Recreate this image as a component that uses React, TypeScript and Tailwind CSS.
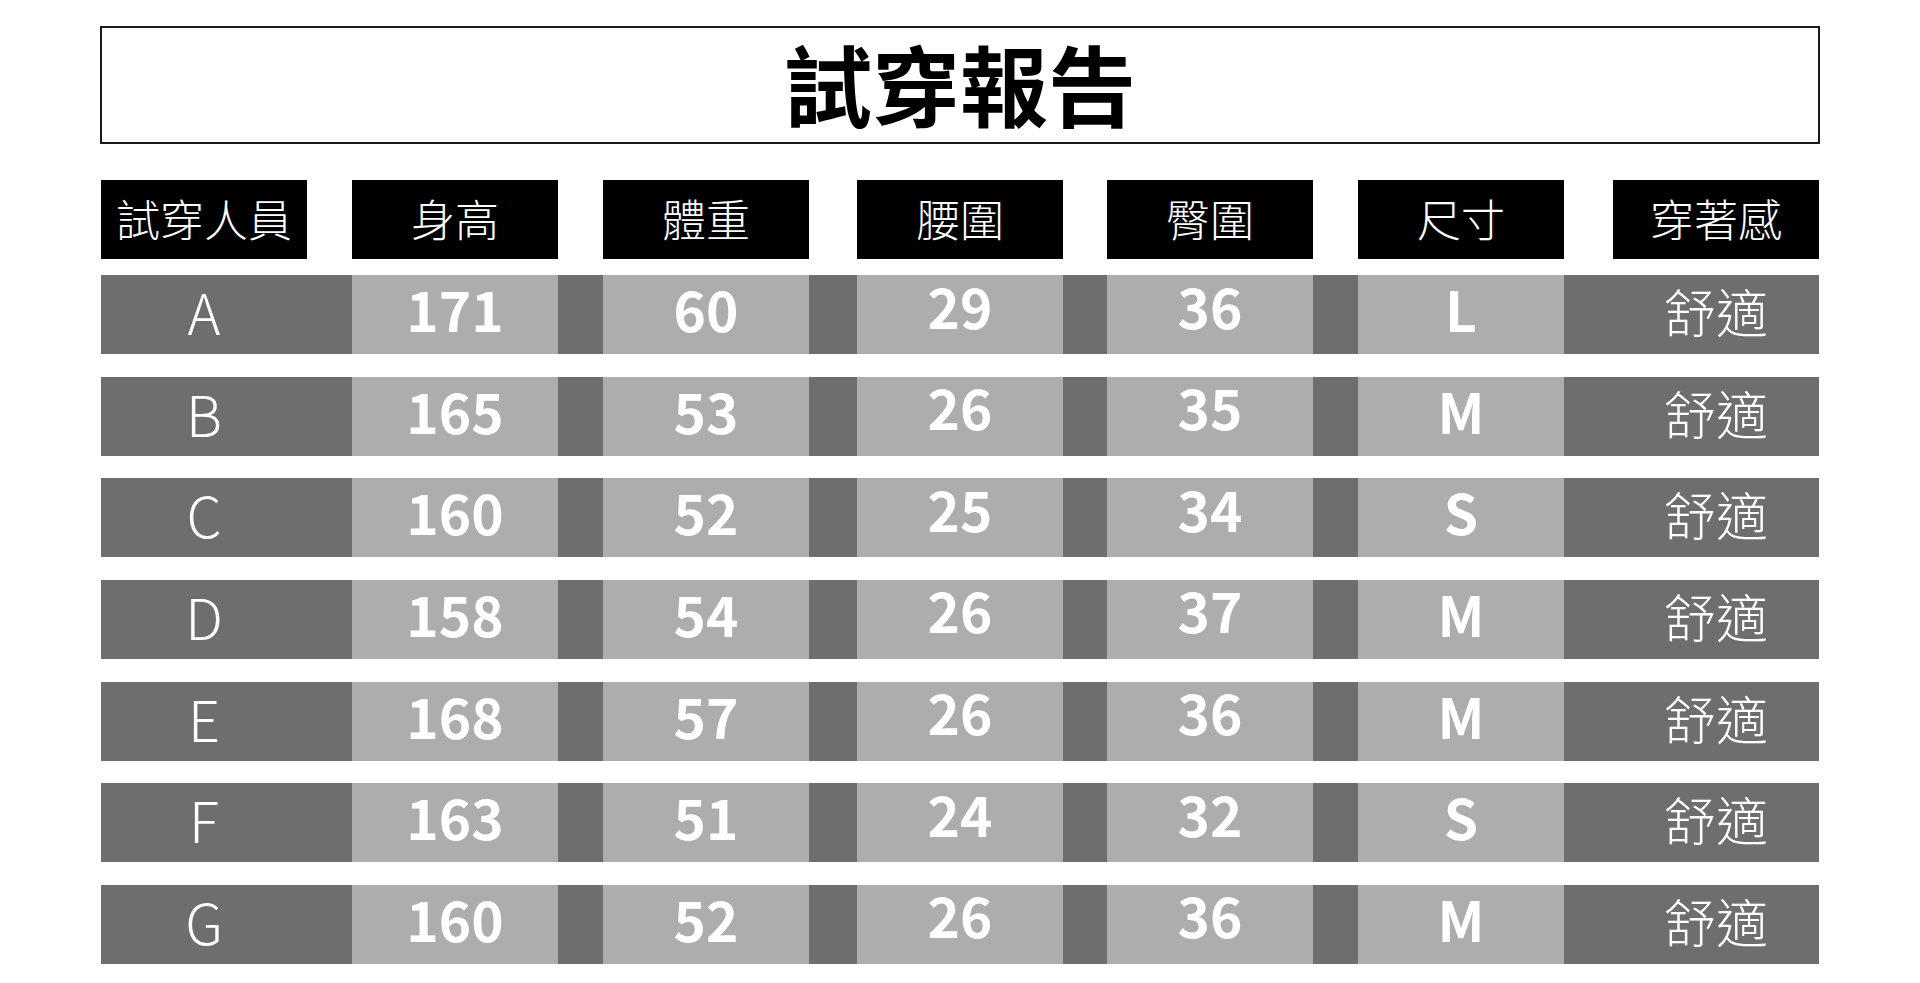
import React from "react";

const headers = ["試穿人員", "身高", "體重", "腰圍", "臀圍", "尺寸", "穿著感"];
const rows: string[][] = [
  ["A", "171", "60", "29", "36", "L", "舒適"],
  ["B", "165", "53", "26", "35", "M", "舒適"],
  ["C", "160", "52", "25", "34", "S", "舒適"],
  ["D", "158", "54", "26", "37", "M", "舒適"],
  ["E", "168", "57", "26", "36", "M", "舒適"],
  ["F", "163", "51", "24", "32", "S", "舒適"],
  ["G", "160", "52", "26", "36", "M", "舒適"],
];

const gaps = ["", "ml-[45px]", "ml-[45px]", "ml-[48px]", "ml-[44px]", "ml-[45px]", "ml-[49px]"];

const font = { fontFamily: '"Noto Sans CJK TC", "Noto Sans", sans-serif' };

export default function App() {
  return (
    <div className="w-[1920px] h-[983px] bg-white overflow-hidden" style={font}>
      <div className="ml-[100px] w-[1720px] pt-[26px] flex flex-col">
        <div className="h-[118px] border-2 border-[#1a1a1a] flex items-center justify-center pb-[6px]">
          <span className="text-[88px] font-bold leading-none text-black">試穿報告</span>
        </div>
        <div className="mt-[36px] flex px-px">
          {headers.map((h, i) => (
            <div key={h} className={"w-[206px] h-[79px] bg-black flex items-center justify-center pb-[4px] " + gaps[i]}>
              <span className="text-[44px] font-light leading-none text-white">{h}</span>
            </div>
          ))}
        </div>
        <div className="mt-[16px] flex flex-col gap-[22.67px] px-px">
          {rows.map((r) => (
            <div key={r[0]} className="h-[79px] bg-[#6f6e6f] flex">
              {r.map((c, i) => {
                const light = i >= 1 && i <= 5;
                const up = i === 3 || i === 4;
                let pad = "pb-[7px] ";
                if (light) pad = up ? "pb-[19px] " : "pb-[12px] ";
                return (
                  <div
                    key={i}
                    className={
                      "w-[206px] h-full flex items-center justify-center text-white leading-none " +
                      (light ? "bg-[#aeadae] " : "") +
                      pad +
                      gaps[i]
                    }
                  >
                    {light ? (
                      <span className="text-[55px] font-bold">{c}</span>
                    ) : i === 0 ? (
                      <span className="text-[56px] font-light">{c}</span>
                    ) : (
                      <span className="text-[52px] font-light">{c}</span>
                    )}
                  </div>
                );
              })}
            </div>
          ))}
        </div>
      </div>
    </div>
  );
}
